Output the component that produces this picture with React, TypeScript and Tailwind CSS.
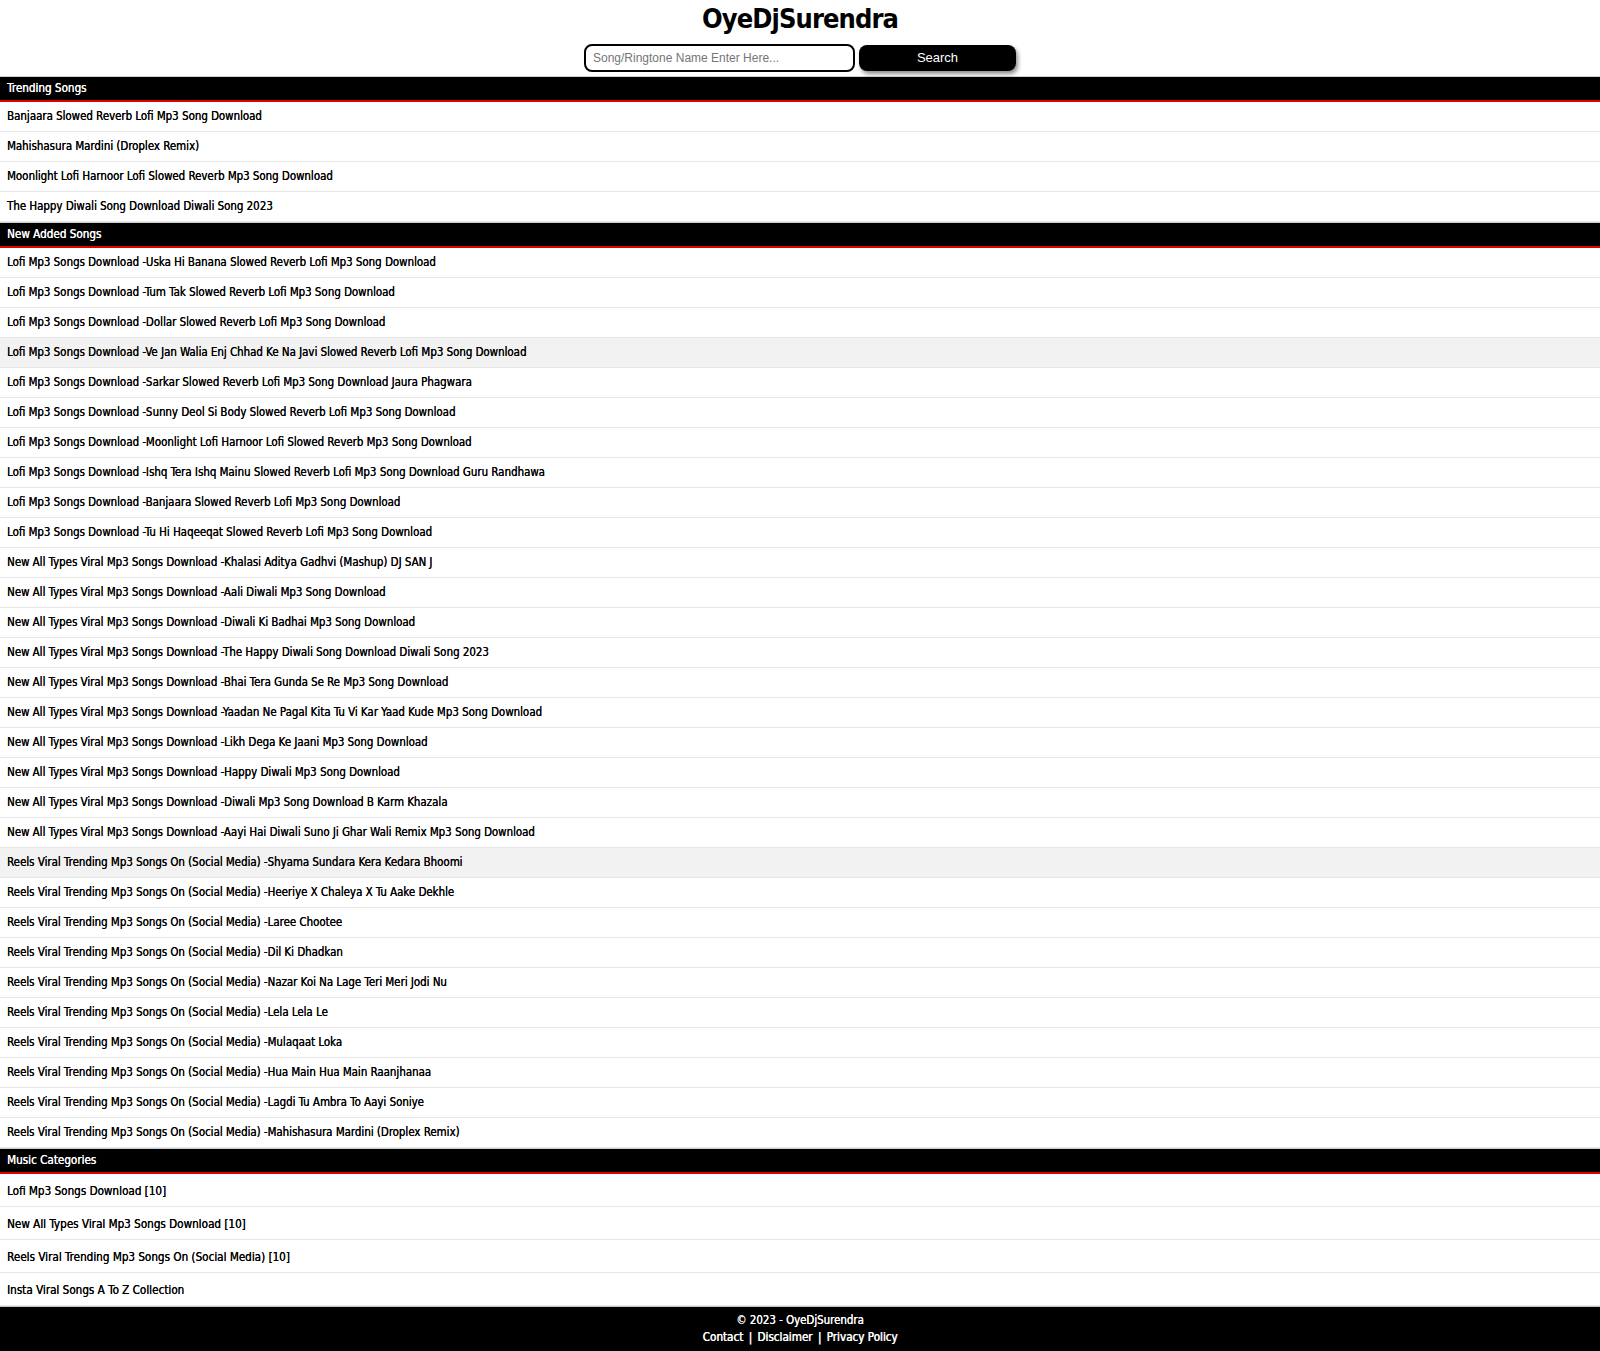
import React from 'react';

const trending = [
    'Banjaara Slowed Reverb Lofi Mp3 Song Download',
    'Mahishasura Mardini (Droplex Remix)',
    'Moonlight Lofi Harnoor Lofi Slowed Reverb Mp3 Song Download',
    'The Happy Diwali Song Download Diwali Song 2023',
];

const lofi = 'Lofi Mp3 Songs Download -';
const viral = 'New All Types Viral Mp3 Songs Download -';
const reels = 'Reels Viral Trending Mp3 Songs On (Social Media) -';

const newAdded = [
    lofi + 'Uska Hi Banana Slowed Reverb Lofi Mp3 Song Download',
    lofi + 'Tum Tak Slowed Reverb Lofi Mp3 Song Download',
    lofi + 'Dollar Slowed Reverb Lofi Mp3 Song Download',
    lofi + 'Ve Jan Walia Enj Chhad Ke Na Javi Slowed Reverb Lofi Mp3 Song Download',
    lofi + 'Sarkar Slowed Reverb Lofi Mp3 Song Download Jaura Phagwara',
    lofi + 'Sunny Deol Si Body Slowed Reverb Lofi Mp3 Song Download',
    lofi + 'Moonlight Lofi Harnoor Lofi Slowed Reverb Mp3 Song Download',
    lofi + 'Ishq Tera Ishq Mainu Slowed Reverb Lofi Mp3 Song Download Guru Randhawa',
    lofi + 'Banjaara Slowed Reverb Lofi Mp3 Song Download',
    lofi + 'Tu Hi Haqeeqat Slowed Reverb Lofi Mp3 Song Download',
    viral + 'Khalasi Aditya Gadhvi (Mashup) DJ SAN J',
    viral + 'Aali Diwali Mp3 Song Download',
    viral + 'Diwali Ki Badhai Mp3 Song Download',
    viral + 'The Happy Diwali Song Download Diwali Song 2023',
    viral + 'Bhai Tera Gunda Se Re Mp3 Song Download',
    viral + 'Yaadan Ne Pagal Kita Tu Vi Kar Yaad Kude Mp3 Song Download',
    viral + 'Likh Dega Ke Jaani Mp3 Song Download',
    viral + 'Happy Diwali Mp3 Song Download',
    viral + 'Diwali Mp3 Song Download B Karm Khazala',
    viral + 'Aayi Hai Diwali Suno Ji Ghar Wali Remix Mp3 Song Download',
    reels + 'Shyama Sundara Kera Kedara Bhoomi',
    reels + 'Heeriye X Chaleya X Tu Aake Dekhle',
    reels + 'Laree Chootee',
    reels + 'Dil Ki Dhadkan',
    reels + 'Nazar Koi Na Lage Teri Meri Jodi Nu',
    reels + 'Lela Lela Le',
    reels + 'Mulaqaat Loka',
    reels + 'Hua Main Hua Main Raanjhanaa',
    reels + 'Lagdi Tu Ambra To Aayi Soniye',
    reels + 'Mahishasura Mardini (Droplex Remix)',
];

// rows shown with the grey background in the screenshot
const shaded = [3, 20];

const categories = [
    'Lofi Mp3 Songs Download [10]',
    'New All Types Viral Mp3 Songs Download [10]',
    'Reels Viral Trending Mp3 Songs On (Social Media) [10]',
    'Insta Viral Songs A To Z Collection',
];

function SectionHeader({ title }: { title: string }) {
    return (
        <div className="border-t border-[#d0d0d0] bg-black border-b-2 border-b-[#e00000] h-[26px] px-[7px] pt-[1px] flex items-center text-white text-[11.6px] [text-shadow:0.3px_0_0_#fff]">
            {title}
        </div>
    );
}

function Row({ text, shade }: { text: string; shade?: boolean }) {
    return (
        <a
            href="#"
            className={`flex items-center h-[30px] px-[7px] pt-[1px] border-b border-[#e6e6e6] text-[11.4px] text-black [text-shadow:0.25px_0_0_#000] ${shade ? 'bg-[#f2f2f2]' : 'bg-white'}`}
        >
            {text}
        </a>
    );
}

export default function App() {
    return (
        <div className="min-h-screen bg-white text-black" style={{ fontFamily: '"DejaVu Sans Condensed", Tahoma, "DejaVu Sans", sans-serif' }}>
            <header className="pt-[2px] pb-[4px] text-center">
                <h1 className="text-[27px] font-bold leading-[34px] tracking-[-0.9px]">OyeDjSurendra</h1>
                <form className="mt-[8px] flex justify-center gap-[4px]" onSubmit={(e) => e.preventDefault()}>
                    <input
                        type="text"
                        placeholder="Song/Ringtone Name Enter Here..."
                        className="w-[271px] h-[28px] border-2 border-black rounded-[8px] px-[7px] text-[12px] outline-none placeholder:text-[#757575]"
                        style={{ fontFamily: '"Liberation Sans", Arial, sans-serif' }}
                    />
                    <button
                        type="submit"
                        className="w-[157px] h-[26px] mt-[1px] bg-black text-white rounded-[8px] text-[13px] shadow-[2px_3px_4px_rgba(0,0,0,0.45)]"
                        style={{ fontFamily: '"Liberation Sans", Arial, sans-serif' }}
                    >
                        Search
                    </button>
                </form>
            </header>

            <SectionHeader title="Trending Songs" />
            <div className="flex flex-col">
                {trending.map((t) => (
                    <Row key={t} text={t} />
                ))}
            </div>

            <SectionHeader title="New Added Songs" />
            <div className="flex flex-col">
                {newAdded.map((t, i) => (
                    <Row key={t + i} text={t} shade={shaded.includes(i)} />
                ))}
            </div>

            <SectionHeader title="Music Categories" />
            <div className="flex flex-col">
                {categories.map((t) => (
                    <a key={t} href="#" className="flex items-center h-[33px] px-[7px] pt-[4px] border-b border-[#e6e6e6] text-[11.6px] text-black [text-shadow:0.25px_0_0_#000]">
                        {t}
                    </a>
                ))}
            </div>

            <footer className="border-t border-[#c8c8c8] bg-black border-b-2 border-b-[#ff0000] text-white text-center text-[11.4px] py-[5px] leading-[17px]">
                <div className="[text-shadow:0.25px_0_0_#fff]">© 2023 - OyeDjSurendra</div>
                <div className="text-[11.6px] [text-shadow:0.5px_0_0_#fff]">
                    <a href="#">Contact</a> <span className="mx-[2px]">|</span> <a href="#">Disclaimer</a>{' '}
                    <span className="mx-[2px]">|</span> <a href="#">Privacy Policy</a>
                </div>
            </footer>
        </div>
    );
}
